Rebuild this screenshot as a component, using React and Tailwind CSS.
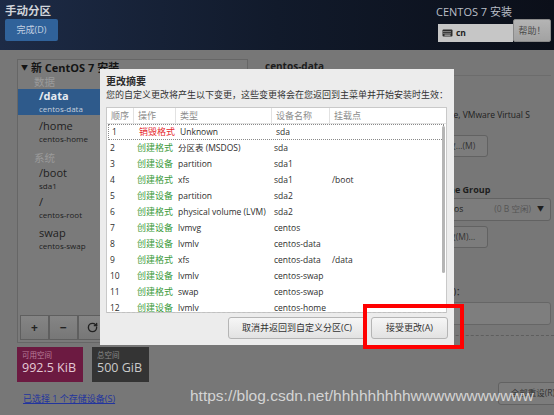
import { RotateCw } from "lucide-react";

const ui = { fontFamily: '"Open Sans", "Noto Sans CJK SC", sans-serif' };

const changes = [
  ["1", "销毁格式", "Unknown", "sda", ""],
  ["2", "创建格式", "分区表 (MSDOS)", "sda", ""],
  ["3", "创建设备", "partition", "sda1", ""],
  ["4", "创建格式", "xfs", "sda1", "/boot"],
  ["5", "创建设备", "partition", "sda2", ""],
  ["6", "创建格式", "physical volume (LVM)", "sda2", ""],
  ["7", "创建设备", "lvmvg", "centos", ""],
  ["8", "创建设备", "lvmlv", "centos-data", ""],
  ["9", "创建格式", "xfs", "centos-data", "/data"],
  ["10", "创建设备", "lvmlv", "centos-swap", ""],
  ["11", "创建格式", "swap", "centos-swap", ""],
  ["12", "创建设备", "lvmlv", "centos-home", ""],
];

function KeyboardIcon() {
  return (
    <svg width="11" height="8" viewBox="0 0 11 8">
      <rect x="0.5" y="0.5" width="10" height="7" rx="1" fill="#2b2b2b" />
      {[2, 4, 6, 8].map((x) => (
        <rect key={x} x={x - 0.5} y="2" width="1" height="1" fill="#cfcfcf" />
      ))}
      {[2, 4, 6, 8].map((x) => (
        <rect key={"b" + x} x={x - 0.5} y="3.8" width="1" height="1" fill="#cfcfcf" />
      ))}
      <rect x="2.5" y="5.6" width="6" height="1" fill="#cfcfcf" />
    </svg>
  );
}

// Mount point entry in the left tree
function MountItem({ mount, device, className = "" }) {
  return (
    <div className={"pl-[21px] " + className}>
      <div className="h-[14px] flex items-center text-[11px] text-[#1e1e1e]">{mount}</div>
      <div className="h-[12px] flex items-center text-[8px] text-[#1e1e1e]">{device}</div>
    </div>
  );
}

function Header() {
  return (
    <div className="h-[50px] flex justify-between bg-gradient-to-r from-[#1d2b46] via-[#111a2b] to-[#0b0f19]">
      <div className="flex flex-col pl-[5px] pt-[3px]">
        <div className="h-[15px] flex items-center text-[11.5px] font-bold text-[#d0d4da]">手动分区</div>
        <button className="mt-[1px] w-[53px] h-[22px] rounded-[2px] bg-[#30629a] text-[9px] text-[#c3d1e2]">
          完成(D)
        </button>
      </div>
      <div className="flex flex-col items-end pr-[3px] pt-[5px]">
        <div className="w-[115px] h-[14px] flex items-center text-[11px] text-[#b9bec7]">CENTOS 7 安装</div>
        <div className="flex items-end">
          <div className="mt-[5px] w-[75px] h-[18px] bg-[#c6c6c6] flex items-center gap-[3px] pl-[4px]">
            <KeyboardIcon />
            <span className="text-[8.5px] font-bold text-[#1e1e1e]">cn</span>
          </div>
          <button className="w-[38px] h-[23px] rounded-[2px] bg-gradient-to-b from-[#b4b4b4] to-[#a2a2a2] border border-[#8a8a8a] text-[9px] text-[#4a4a4a]">
            帮助！
          </button>
        </div>
      </div>
    </div>
  );
}

function LeftColumn() {
  return (
    <div className="w-[231px] ml-[17px] flex flex-col">
      <div className="mt-[9px] h-[284px] border border-[#666] bg-[#7a7a7a] flex flex-col">
        <div className="h-[16px] flex items-center pl-[3px] text-[11px] font-bold text-[#141414]">
          <span className="text-[7px] mr-[3px]">▼</span>新 CentOS 7 安装
        </div>
        <div className="h-[13px] flex items-center pl-[16px] text-[10.5px] text-[#9b9b9b]">数据</div>
        <div className="bg-[#2e5a8b] pl-[21px]">
          <div className="h-[14px] flex items-center text-[11px] font-bold text-[#e6ebf1]">/data</div>
          <div className="h-[12px] flex items-center text-[8px] text-[#c4d0de]">centos-data</div>
        </div>
        <MountItem mount="/home" device="centos-home" className="pt-[4px]" />
        <div className="mt-[7px] h-[14px] flex items-center pl-[16px] text-[10.5px] text-[#9b9b9b]">系统</div>
        <MountItem mount="/boot" device="sda1" />
        <MountItem mount="/" device="centos-root" className="pt-[3px]" />
        <MountItem mount="swap" device="centos-swap" className="pt-[5px]" />
        <div className="mt-auto mb-[2px] ml-[2px] flex">
          {["+", "−"].map((s) => (
            <button
              key={s}
              className="w-[29px] h-[25px] border border-[#5f5f5f] bg-gradient-to-b from-[#858585] to-[#777] text-[12px] font-bold text-[#222]"
            >
              {s}
            </button>
          ))}
          <button className="w-[29px] h-[25px] border border-[#5f5f5f] bg-gradient-to-b from-[#858585] to-[#777] flex items-center justify-center">
            <RotateCw size={11} strokeWidth={3} color="#222" />
          </button>
        </div>
      </div>
      <div className="mt-[4px] flex gap-[9px]">
        <div className="w-[66px] h-[35px] bg-[#6c1a41] pl-[5px] pt-[3px]">
          <div className="text-[7.5px] leading-[10px] text-[#b97f9a]">可用空间</div>
          <div className="text-[12.5px] leading-[16px] text-[#e4c9d5]">992.5 KiB</div>
        </div>
        <div className="w-[57px] h-[35px] bg-[#343434] pl-[5px] pt-[3px]">
          <div className="text-[7.5px] leading-[10px] text-[#8a8a8a]">总空间</div>
          <div className="text-[12.5px] leading-[16px] text-[#cacaca]">500 GiB</div>
        </div>
      </div>
      <div className="mt-[10px] pl-[6px] text-[9px] text-[#22349e] underline">已选择 1 个存储设备(S)</div>
    </div>
  );
}

function RightPanel() {
  return (
    <div className="flex-1 pl-[17px] flex flex-col overflow-hidden">
      <div className="mt-[9px] h-[14px] flex items-center text-[10px] font-bold text-[#1c1c1c]">centos-data</div>
      <div className="mt-[2px] border-b border-[#6c6c6c] mr-[3px]" />
      <div className="ml-[161px] flex flex-col w-[125px]">
        <div className="mt-[33px] h-[12px] flex items-center text-[8.5px] text-[#1e1e1e] whitespace-nowrap">
          VMware, VMware Virtual S
        </div>
        <button className="mt-[14px] w-[62px] h-[22px] rounded-[3px] border border-[#626262] bg-[#7c7c7c] text-[8.5px] text-[#333]">
          修改...(M)
        </button>
        <div className="mt-[27px] h-[12px] flex items-center text-[9px] font-bold text-[#1e1e1e]">Volume Group</div>
        <div className="mt-[2px] h-[23px] rounded-[3px] border border-[#626262] bg-[#7c7c7c] flex items-center pl-[10px] pr-[6px] text-[8.5px]">
          <span className="text-[#1e1e1e]">centos</span>
          <span className="ml-auto text-[#555]">(0 B 空闲)</span>
          <span className="ml-[6px] text-[7px] text-[#1e1e1e]">▼</span>
        </div>
        <button className="mt-[5px] w-[62px] h-[22px] rounded-[3px] border border-[#626262] bg-[#7c7c7c] text-[8.5px] text-[#333]">
          修改(M)...
        </button>
        <div className="mt-[38px] h-[12px] flex items-center text-[9px] text-[#1e1e1e]">名称(N)：</div>
        <div className="mt-[4px] h-[23px] rounded-[3px] border border-[#666] bg-[#7e7e7e]" />
      </div>
      <div className="mt-[10px] border-t border-dashed border-[#5e5e5e]" />
      <div className="mt-[46px] flex justify-end -mr-[14px]">
        <button className="w-[70px] h-[23px] rounded-[3px] border border-[#626262] bg-[#7c7c7c] text-[8.5px] text-[#333]">
          全部重设(R)
        </button>
      </div>
    </div>
  );
}

function ChangeDialog() {
  return (
    <div className="absolute left-[100px] top-[69px] w-[354px] h-[276px] bg-[#ececec] flex flex-col px-[6px]">
      <div className="mt-[5px] h-[14px] flex items-center text-[10px] font-bold text-[#2a2a2a]">更改摘要</div>
      <div className="mt-[1px] h-[12px] flex items-center text-[9px] text-[#333] whitespace-nowrap">
        您的自定义更改将产生以下变更，这些变更将会在您返回到主菜单并开始安装时生效：
      </div>
      <div className="mt-[6px] w-[341px] h-[206px] border border-[#c9c9c9] border-b-dashed bg-white flex flex-col relative">
        <div className="h-[16px] grid grid-cols-[27px_42px_96px_58px_1fr] border-b border-[#e2e2e2] text-[9px] text-[#8c8c8c]">
          {["顺序", "操作", "类型", "设备名称", "挂载点"].map((h, i) => (
            <div key={h} className={"flex items-center pl-[4px] " + (i < 4 ? "border-r border-[#e2e2e2]" : "")}>
              {h}
            </div>
          ))}
        </div>
        <div className="flex-1 overflow-hidden">
          {changes.map(([n, op, type, dev, mnt], i) => (
            <div
              key={n}
              className={
                "h-[16px] grid grid-cols-[27px_42px_96px_58px_1fr] items-center text-[8.5px] text-[#2e2e2e] whitespace-nowrap " +
                (i === 0 ? "border border-dotted border-[#8a8a8a] mx-[1px] mr-[2px]" : "")
              }
            >
              <span className="pl-[3px]">{n}</span>
              <span className={"pl-[3px] text-[9px] " + (i === 0 ? "text-[#e6262b]" : "text-[#3a9a3a]")}>{op}</span>
              <span className="pl-[2px]">{type}</span>
              <span className="pl-[2px]">{dev}</span>
              <span className="pl-[2px]">{mnt}</span>
            </div>
          ))}
        </div>
        <div className="absolute right-[1px] top-[18px] w-[3px] h-[147px] rounded-full bg-[#b5b5b5]" />
        <div className="absolute left-0 right-0 bottom-[-1px] border-b border-dashed border-[#c0c0c0]" />
      </div>
      <div className="mt-[4px] flex justify-end gap-[5px]">
        <button className="w-[138px] h-[22px] rounded-[3px] border border-[#b5b5b5] bg-gradient-to-b from-[#f6f6f6] to-[#e2e2e2] text-[9px] text-[#333]">
          取消并返回到自定义分区(C)
        </button>
        <button className="w-[77px] h-[22px] rounded-[3px] border border-[#b5b5b5] bg-gradient-to-b from-[#f6f6f6] to-[#e2e2e2] text-[9px] text-[#333]">
          接受更改(A)
        </button>
      </div>
    </div>
  );
}

export default function App() {
  return (
    <div className="w-[554px] h-[415px] relative overflow-hidden bg-[#777] flex flex-col" style={ui}>
      <Header />
      <div className="flex-1 flex">
        <LeftColumn />
        <RightPanel />
      </div>
      <ChangeDialog />
      {/* annotation box */}
      <div className="absolute left-[363px] top-[304px] w-[101px] h-[45px] border-[4px] border-[#ff0000]" />
      {/* watermark */}
      <div
        className="absolute left-[190px] top-[384px] text-[15.5px] text-[#d4d4d4] whitespace-nowrap"
        style={{ fontFamily: '"Liberation Sans", sans-serif' }}
      >
        https://blog.csdn.net/hhhhhhhhhwwwwwwwwwww
      </div>
    </div>
  );
}
